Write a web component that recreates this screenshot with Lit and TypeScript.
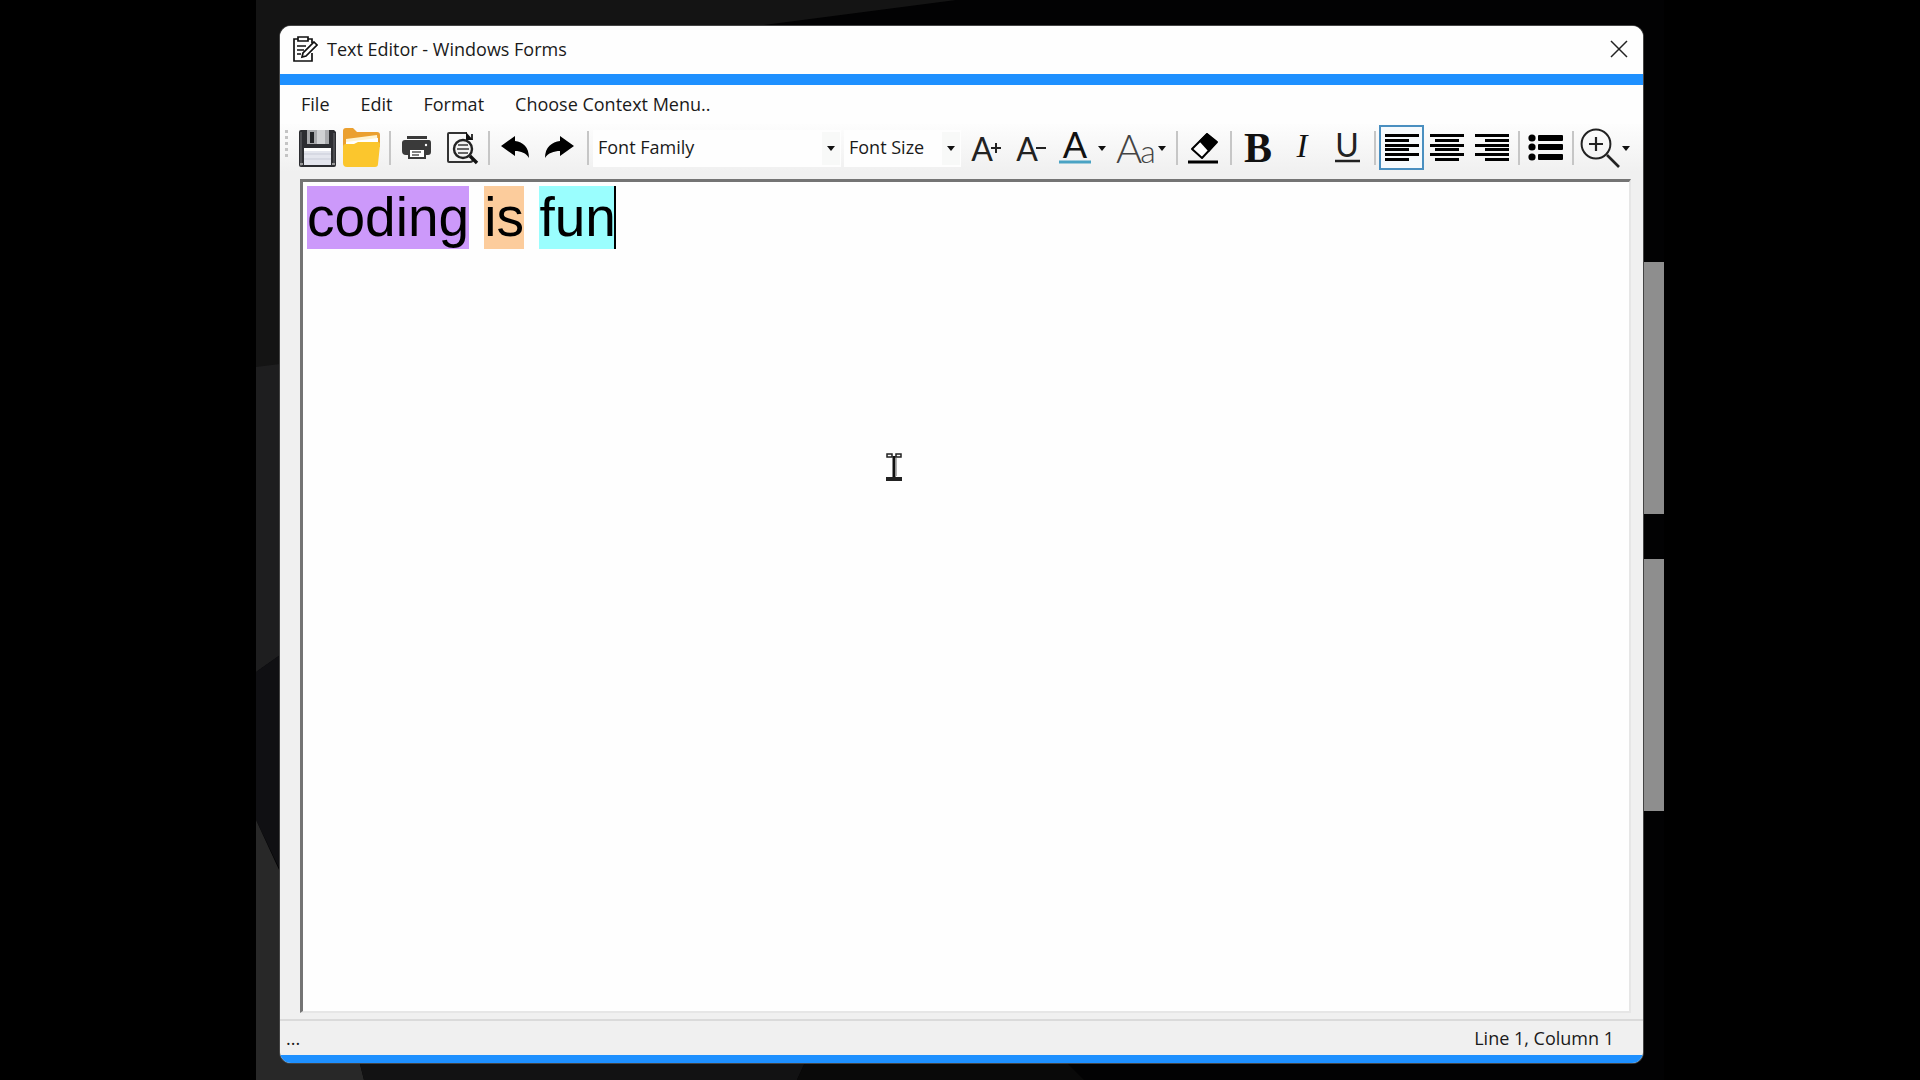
import { LitElement, html, svg, css } from "lit";
import { customElement, property, state } from "lit/decorators.js";

const caret = (x: number) => svg`<path d="M${x - 4} 21h8l-4 5z" fill="#111"/>`;

const bars = (longX: number, shortX: number) =>
  svg`<g fill="#000">${[9, 14, 19, 23, 28, 33].map((y, i) =>
    i % 2 === 0
      ? svg`<rect x=${longX} y=${y} width="34" height="3"/>`
      : svg`<rect x=${shortX} y=${y} width="24" height="3"/>`
  )}</g>`;

const icons: Record<string, unknown> = {
  save: svg`
    <path d="M4 7q0-2 2-2h33l2 2v33q0 2-2 2H6q-2 0-2-2z" fill="#2c2d31"/>
    <path d="M5 7h2v34H5zM38 8h2v32h-2z" fill="#4b4c50"/>
    <path d="M12 5h22v14H12z" fill="#a9aaad"/><path d="M22 5h8v14h-8z" fill="#d0d1d3"/>
    <path d="M15 7h4v11h-4z" fill="#242528"/>
    <path d="M9 23h27v17H9z" fill="#e4e6ee"/><path d="M9 23h27v3H9z" fill="#fff"/>
    <path d="M9 29h27M9 34h27" stroke="#c9ccd8"/>
    <path d="M5 38h3v2H5zM37 38h3v2h-3z" fill="#999"/>`,
  open: svg`
    <path d="M3 6q0-3 3-3h7l4 4h20q3 0 3 3v12H3z" fill="#eba02f"/>
    <path d="M6 14l31-4 1 12H6z" fill="#fff3cf"/>
    <path d="M6 17l32-4v8H6z" fill="#fff"/>
    <path d="M3 22q0-3 3-3h8l4-2h20q2 0 2 3l-2 19q0 3-3 3H7q-4 0-4-4z" fill="#fbc62d"/>`,
  print: svg`
    <path d="M13 11h20v3H13z" fill="#3a3a3a"/>
    <path d="M11 15h24q2 0 2 3v9q0 3-3 3h-3v-6H15v6h-3q-4 0-4-4v-8q0-3 3-3z" fill="#3a3a3a"/>
    <path d="M15 24h16v9H15z" fill="#fff" stroke="#3a3a3a" stroke-width="2"/>
    <path d="M18 27h9M18 30h7" stroke="#555" stroke-width="1.4"/>
    <circle cx="32" cy="20" r="1.2" fill="#fff"/>`,
  preview: svg`
    <path d="M33 15V9M28 8H10q-1 0-1 1v27q0 1 1 1h21q3 0 3-3" fill="none" stroke="#333" stroke-width="2"/>
    <path d="M27 7l7 8h-7z" fill="#111"/>
    <circle cx="24" cy="24" r="9" fill="#f2f2f2" stroke="#222" stroke-width="2.4"/>
    <path d="M19 20h10M18 24h12M19 28h10" stroke="#666" stroke-width="2"/>
    <path d="M31 31l7 7" stroke="#111" stroke-width="3.4"/>`,
  undo: svg`<path d="M8 21l14-10v5c8 1 14 6 14 17-3-5-8-7-14-7v5z" fill="#000"/>`,
  redo: svg`<path d="M36 21L22 11v5C14 17 7 22 7 33c3-5 9-7 15-7v5z" fill="#000"/>`,
  grow: svg`
    <text x="18" y="36" class="letter" font-size="32">A</text>
    <path d="M27 23h10M32 18v10" stroke="#222" stroke-width="2"/>`,
  shrink: svg`
    <text x="18" y="36" class="letter" font-size="32">A</text>
    <path d="M27 23h10" stroke="#222" stroke-width="2"/>`,
  color: svg`
    <text x="21" y="33" class="letter regular" font-size="36">A</text>
    <path d="M5 37h32" stroke="#4aa3c4" stroke-width="3"/>${caret(48)}`,
  case: svg`
    <text x="16" y="38" class="letter thin" font-size="40">A</text>
    <text x="35" y="38" class="letter thin" font-size="32">a</text>${caret(49)}`,
  erase: svg`
    <path d="M11 24L26 9l10 8-15 16z" fill="#fff" stroke="#000" stroke-width="2" stroke-linejoin="round"/>
    <path d="M18 16L26 8l10 9-8 10z" fill="#000"/>
    <path d="M7 37h30" stroke="#000" stroke-width="3"/>`,
  bold: svg`<text x="23" y="37" class="serif" font-weight="700" font-size="42">B</text>`,
  italic: svg`<text x="22" y="32" class="serif" font-style="italic" font-size="33">I</text>`,
  underline: svg`
    <text x="22" y="32" class="letter" font-size="32">U</text>
    <path d="M10 36h25" stroke="#222" stroke-width="2.4"/>`,
  left: bars(6, 6),
  center: bars(6, 11),
  right: bars(6, 16),
  bullets: svg`${[13, 22, 32].map(
    (y) => svg`<circle cx="9" cy=${y} r="3.6"/><rect x="15" y=${y - 3} width="25" height="6" rx="1"/>`
  )}`,
  zoom: svg`
    <circle cx="19" cy="19" r="14.4" fill="none" stroke="#222" stroke-width="2"/>
    <path d="M12 19h14M19 12v14" stroke="#222" stroke-width="2.2"/>
    <path d="M30 30l12 12" stroke="#222" stroke-width="2.6"/>${caret(49)}`,
};

@customElement("tool-button")
class ToolButton extends LitElement {
  @property() icon = "";
  @property() label = "";
  @property({ type: Boolean }) split = false;
  @property({ type: Boolean }) pressed = false;

  static styles = css`
    :host { display: block; flex: none; }
    .tool {
      display: block; padding: 0; border: 0; margin: 0; background: none;
      width: 45px; height: 45px;
    }
    .split { width: 59px; }
    .pressed { box-shadow: inset 0 0 0 2px #4a8fc0; background: #f6fafd; }
    .glyph { display: block; width: 100%; height: 100%; overflow: visible; }
    .letter { font-family: Lato, "Open Sans", sans-serif; font-weight: 400; text-anchor: middle; fill: #222; }
    .regular { fill: #111; }
    .thin { font-weight: 300; fill: #444; }
    .serif { font-family: "Liberation Serif", serif; text-anchor: middle; fill: #111; }
  `;

  render() {
    return html`<button
      class="tool ${this.split ? "split" : ""} ${this.pressed ? "pressed" : ""}"
      aria-label=${this.label}
      aria-pressed=${this.pressed ? "true" : "false"}
    >
      <svg class="glyph" viewBox="0 0 ${this.split ? 59 : 45} 45" aria-hidden="true">${icons[this.icon]}</svg>
    </button>`;
  }
}

@customElement("app-root")
class AppRoot extends LitElement {
  @state() private align = "left";

  static styles = css`
    :host { display: block; background: #000; font-family: "Open Sans", "Noto Sans", sans-serif; font-size: 18px; color: #1a1a1a; }
    .screen { display: grid; grid-template-columns: 2fr 11fr 2fr; min-height: 100vh; }
    .desktop { grid-column: 2; position: relative; display: flex; padding: 26px 21px 17px 24px; background: #020203; overflow: hidden; }
    .wallpaper { position: absolute; inset: 0; width: 100%; height: 100%; }
    .window {
      position: relative; flex: 1; min-width: 0; display: flex; flex-direction: column;
      background: #f0f0f0; border-radius: 11px; overflow: hidden; box-shadow: 0 0 0 1px #444;
    }
    .titlebar { display: flex; align-items: center; gap: 9px; height: 46px; padding: 0 12px 2px; background: #fefefe; }
    .title { flex: 1; margin: 0; font-size: 18px; font-weight: 400; line-height: 24px; }
    .app-icon { width: 26px; height: 26px; }
    .close { display: flex; align-items: center; justify-content: center; width: 24px; height: 24px; padding: 0; border: 0; background: none; }
    .accent { height: 11px; background: #1e90ff; }
    .accent.foot { height: 8px; }
    .menu { display: flex; gap: 31px; height: 37px; padding: 0 21px 2px; background: #fefefe; }
    .menu-item { padding: 0; border: 0; background: none; font: inherit; color: inherit; }
    .toolbar { display: flex; align-items: flex-start; height: 54px; padding: 1px 0 0 5px; background: linear-gradient(#fdfdfd, #f0f0f0 48px); }
    .grip { display: flex; flex-direction: column; gap: 3px; width: 10px; padding-top: 5px; }
    .dot { width: 3px; height: 3px; background: #c4c4c4; }
    .sep { flex: none; width: 2px; height: 34px; margin: 6px 3px 6px 4px; background: #c6c6c6; }
    .combo { position: relative; display: flex; height: 37px; margin: 5px 3px 0 1px; background: #fefefe; }
    .select { appearance: none; width: 100%; padding: 0 20px 3px 5px; border: 0; background: none; font: inherit; color: inherit; }
    .family { width: 248px; }
    .size { width: 117px; margin: 5px 3px 0 0; }
    .drop { position: absolute; right: 1px; top: 2px; width: 18px; height: 33px; background: #f8f9f8; pointer-events: none; }
    .editor {
      position: relative; flex: 1; margin: 0 12px 6px 20px; padding: 4px; background: #fefefe; outline: 0;
      border: 3px solid; border-color: #747474 #e6e6e6 #e6e6e6 #747474; border-width: 3px 2px 2px 3px;
      font-family: "Liberation Sans", sans-serif; font-size: 55px; line-height: 63px; color: #000;
    }
    .line { margin: 0; white-space: pre-wrap; }
    .mark { display: inline-block; color: inherit; }
    .purple { background: #cc99fa; }
    .orange { background: #fccc9c; }
    .cyan { background: #9afefe; box-shadow: inset -2px 0 0 #000; }
    .pointer { position: absolute; left: 581px; top: 269px; width: 20px; height: 32px; pointer-events: none; }
    .status { display: flex; justify-content: space-between; align-items: center; height: 34px; padding: 0 29px 0 6px; border-top: 2px solid #dadada; }
  `;

  private tool(icon: string, label: string, split = false) {
    return html`<tool-button icon=${icon} label=${label} ?split=${split}></tool-button>`;
  }

  private alignTool(side: string) {
    return html`<tool-button
      icon=${side}
      label="Align ${side}"
      ?pressed=${this.align === side}
      @click=${() => (this.align = side)}
    ></tool-button>`;
  }

  private combo(name: string, cls: string) {
    return html`<div class="combo ${cls}">
      <select class="select" aria-label=${name}><option>${name}</option></select>
      <svg class="drop" viewBox="0 0 18 33" aria-hidden="true"><path d="M5 14h8l-4 5z" fill="#111" /></svg>
    </div>`;
  }

  render() {
    const sep = html`<span class="sep"></span>`;
    return html`<div class="screen">
      <main class="desktop">
        <svg class="wallpaper" viewBox="0 0 1408 1080" preserveAspectRatio="none" aria-hidden="true">
          <path d="M0 0H700L500 26 24 400V655L0 672z" fill="#141414" />
          <path d="M0 367L24 364V655L0 672z" fill="#1e1e1f" />
          <path d="M0 672L24 655V870L0 820z" fill="#101013" />
          <path d="M0 820L24 872V1050L104 1064 108 1080H0z" fill="#282828" />
          <path d="M102 1056H552L541 1080H108z" fill="#121213" />
          <path d="M552 1056H804L828 1080H541z" fill="#090909" />
          <path d="M1380 262h28v252h-28zM1380 559h28v252h-28z" fill="#8e8e8e" />
        </svg>
        <section class="window" aria-label="Text Editor">
          <header class="titlebar">
            <svg class="app-icon" viewBox="0 0 26 26" fill="none" stroke="#111" stroke-width="1.7" aria-hidden="true">
              <path d="M6 3H2v22h18v-8M16 3h4v4M6 1h10v4H6zM5 10h9M5 14h7M5 18h4" />
              <path d="M22 6l3 3L14 20l-4 1 1-4z" />
            </svg>
            <h1 class="title">Text Editor - Windows Forms</h1>
            <button class="close" aria-label="Close">
              <svg width="18" height="18" viewBox="0 0 18 18" aria-hidden="true">
                <path d="M1 1l16 16M17 1L1 17" stroke="#222" stroke-width="1.5" />
              </svg>
            </button>
          </header>
          <div class="accent"></div>
          <nav class="menu" aria-label="Main menu">
            ${["File", "Edit", "Format", "Choose Context Menu.."].map(
              (m) => html`<button class="menu-item">${m}</button>`
            )}
          </nav>
          <div class="toolbar" role="toolbar" aria-label="Formatting">
            <div class="grip">${[0, 1, 2, 3, 4].map(() => html`<span class="dot"></span>`)}</div>
            ${this.tool("save", "Save")} ${this.tool("open", "Open")} ${sep}
            ${this.tool("print", "Print")} ${this.tool("preview", "Print preview")} ${sep}
            ${this.tool("undo", "Undo")} ${this.tool("redo", "Redo")} ${sep}
            ${this.combo("Font Family", "family")} ${this.combo("Font Size", "size")}
            ${this.tool("grow", "Increase font size")} ${this.tool("shrink", "Decrease font size")}
            ${this.tool("color", "Font color", true)} ${this.tool("case", "Change case", true)} ${sep}
            ${this.tool("erase", "Clear formatting")} ${sep}
            ${this.tool("bold", "Bold")} ${this.tool("italic", "Italic")} ${this.tool("underline", "Underline")} ${sep}
            ${this.alignTool("left")} ${this.alignTool("center")} ${this.alignTool("right")} ${sep}
            ${this.tool("bullets", "Bulleted list")} ${sep} ${this.tool("zoom", "Zoom in", true)}
          </div>
          <div class="editor" role="textbox" aria-label="Document" aria-multiline="true" contenteditable="true" spellcheck="false">
            <p class="line"><mark class="mark purple">coding</mark> <mark class="mark orange">is</mark> <mark class="mark cyan">fun</mark></p>
            <svg class="pointer" viewBox="0 0 20 32" aria-hidden="true">
              <path d="M3 3h5v3H3zM12 3h5v3h-5z" fill="#fff" stroke="#222" stroke-width="1.5" />
              <path d="M10 5v22" stroke="#111" stroke-width="3" />
              <path d="M12 7v18" stroke="#999" stroke-width="1.5" />
              <path d="M2 26h16v4H2z" fill="#222" />
            </svg>
          </div>
          <footer class="status"><span>...</span><span>Line 1, Column 1</span></footer>
          <div class="accent foot"></div>
        </section>
      </main>
    </div>`;
  }
}
